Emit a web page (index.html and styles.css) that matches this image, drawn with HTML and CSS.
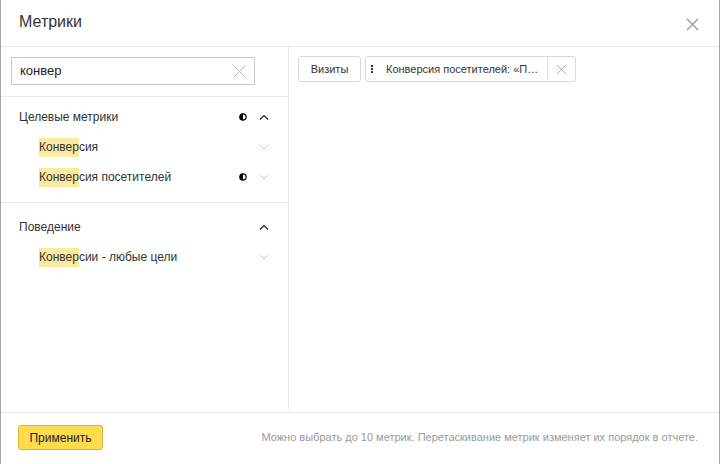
FILE: index.html
```html
<!DOCTYPE html>
<html lang="ru">
<head>
<meta charset="utf-8">
<title>Метрики</title>
<link rel="stylesheet" href="styles.css">
</head>
<body>
<div class="modal">
  <div class="header">
    <div class="title">Метрики</div>
    <svg class="close" width="13" height="13" viewBox="0 0 13 13"><path d="M1 1L12 12M12 1L1 12" stroke="#999" stroke-width="1.4" fill="none"/></svg>
  </div>
  <div class="main">
    <div class="left">
      <div class="search-wrap">
        <div class="search">
          <span class="search-text">конвер</span>
          <svg class="clear" width="13" height="13" viewBox="0 0 13 13"><path d="M1 1L12 12M12 1L1 12" stroke="#b3b3b3" stroke-width="1" fill="none"/></svg>
        </div>
      </div>
      <div class="group first">
        <div class="row group-title">
          <span class="label">Целевые метрики</span>
          <span class="icons">
            <svg class="half" width="8" height="8" viewBox="0 0 8 8"><circle cx="4" cy="4" r="3.2" fill="#fff" stroke="#000" stroke-width="1.2"/><path d="M4 0.8A3.2 3.2 0 0 0 4 7.2Z" fill="#000"/></svg>
            <svg class="chev" width="10" height="6" viewBox="0 0 10 6"><path d="M1 5.5L5 1.5L9 5.5" stroke="#222" stroke-width="1.2" fill="none"/></svg>
          </span>
        </div>
        <div class="row item">
          <span class="label"><mark>Конвер</mark>сия</span>
          <span class="icons">
            <svg class="chev" width="10" height="6" viewBox="0 0 10 6"><path d="M1 1L5 5L9 1" stroke="#c4c4c4" stroke-width="1" fill="none"/></svg>
          </span>
        </div>
        <div class="row item">
          <span class="label"><mark>Конвер</mark>сия посетителей</span>
          <span class="icons">
            <svg class="half" width="8" height="8" viewBox="0 0 8 8"><circle cx="4" cy="4" r="3.2" fill="#fff" stroke="#000" stroke-width="1.2"/><path d="M4 0.8A3.2 3.2 0 0 0 4 7.2Z" fill="#000"/></svg>
            <svg class="chev" width="10" height="6" viewBox="0 0 10 6"><path d="M1 1L5 5L9 1" stroke="#c4c4c4" stroke-width="1" fill="none"/></svg>
          </span>
        </div>
      </div>
      <div class="group last">
        <div class="row group-title">
          <span class="label">Поведение</span>
          <span class="icons">
            <svg class="chev" width="10" height="6" viewBox="0 0 10 6"><path d="M1 5.5L5 1.5L9 5.5" stroke="#222" stroke-width="1.2" fill="none"/></svg>
          </span>
        </div>
        <div class="row item">
          <span class="label"><mark>Конвер</mark>сии - любые цели</span>
          <span class="icons">
            <svg class="chev" width="10" height="6" viewBox="0 0 10 6"><path d="M1 1L5 5L9 1" stroke="#c4c4c4" stroke-width="1" fill="none"/></svg>
          </span>
        </div>
      </div>
    </div>
    <div class="right">
      <div class="chips">
        <div class="btn-visits">Визиты</div>
        <div class="chip">
          <span class="handle"><i></i><i></i><i></i></span>
          <span class="chip-text">Конверсия посетителей: «П…</span>
          <span class="chip-close">
            <svg width="11" height="11" viewBox="0 0 11 11"><path d="M1 1L10 10M10 1L1 10" stroke="#aaa" stroke-width="1" fill="none"/></svg>
          </span>
        </div>
      </div>
    </div>
  </div>
  <div class="footer">
    <div class="apply">Применить</div>
    <div class="hint">Можно выбрать до 10 метрик. Перетаскивание метрик изменяет их порядок в отчете.</div>
  </div>
</div>
</body>
</html>
```
FILE: styles.css
```css
* { box-sizing: border-box; }
html, body { margin: 0; padding: 0; background: #fff; }
body {
  font-family: "Liberation Sans", Arial, sans-serif;
  color: #333;
  width: 721px;
  height: 464px;
  overflow: hidden;
}
.modal {
  width: 720px;
  height: 464px;
  border-left: 1px solid #a6a6a6;
  border-right: 1px solid #a6a6a6;
  display: flex;
  flex-direction: column;
  background: #fff;
}
.header {
  height: 47px;
  flex: none;
  border-bottom: 1px solid #e8e8e8;
  display: flex;
  align-items: center;
  justify-content: space-between;
  padding: 0 20px 0 18px;
}
.title {
  font-size: 16px;
  color: #333;
  padding-bottom: 2px;
}
.close { display: block; margin-top: 3px; }
.main {
  height: 366px;
  flex: none;
  display: flex;
  border-bottom: 1px solid #e8e8e8;
}
.left {
  width: 288px;
  flex: none;
  border-right: 1px solid #e8e8e8;
  margin-bottom: 2px;
}
.search-wrap {
  padding: 10px 33px 11px 10px;
  border-bottom: 1px solid #e8e8e8;
}
.search {
  height: 28px;
  border: 1px solid #c9c9c9;
  display: flex;
  align-items: center;
  justify-content: space-between;
  padding: 0 8px 0 8px;
}
.search-text { font-size: 13px; color: #222; padding-bottom: 1px; }
.clear { display: block; }
.group {
  padding: 9px 0 10px;
  border-bottom: 1px solid #e8e8e8;
}
.group.first { padding-top: 5px; }
.group.last { border-bottom: none; }
.row {
  height: 30px;
  display: flex;
  align-items: center;
  justify-content: space-between;
  font-size: 12px;
  padding-right: 19px;
}
.group-title { padding-left: 18px; }
.item { padding-left: 38px; }
mark {
  background: #fdeaa2;
  color: #333;
  padding: 2px 0 3px;
}
.icons {
  display: flex;
  align-items: center;
  gap: 12px;
}
.icons svg { display: block; }
.right {
  flex: 1;
  padding: 9px 9px;
}
.chips {
  display: flex;
  gap: 4px;
}
.btn-visits {
  height: 26px;
  width: 63px;
  border: 1px solid #d9d9d9;
  border-radius: 3px;
  display: flex;
  align-items: center;
  justify-content: center;
  font-size: 11px;
}
.chip {
  height: 26px;
  width: 211px;
  border: 1px solid #d9d9d9;
  border-radius: 3px;
  display: flex;
  align-items: center;
}
.handle {
  display: flex;
  flex-direction: column;
  gap: 1px;
  margin: 0 0 0 5px;
  width: 3px;
}
.handle i {
  display: block;
  width: 2px;
  height: 2px;
  background: #333;
}
.chip-text {
  font-size: 11px;
  margin-left: 12px;
  flex: 1;
  white-space: nowrap;
}
.chip-close {
  width: 28px;
  height: 100%;
  border-left: 1px solid #e0e0e0;
  display: flex;
  align-items: center;
  justify-content: center;
}
.chip-close svg { display: block; }
.footer {
  flex: 1;
  display: flex;
  align-items: center;
  justify-content: space-between;
  padding: 0 21px 0 17px;
}
.apply {
  width: 85px;
  height: 25px;
  background: #ffdb4d;
  border: 1px solid #d9b43a;
  border-radius: 3px;
  display: flex;
  align-items: center;
  justify-content: center;
  font-size: 12px;
  color: #222;
  margin-top: -2px;
}
.hint {
  font-size: 11px;
  color: #999;
  margin-top: -3px;
}
```
